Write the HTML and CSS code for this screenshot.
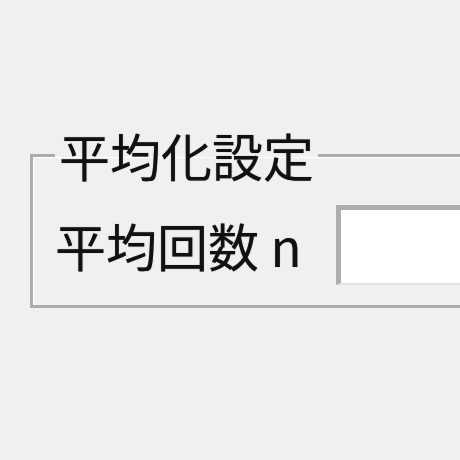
FILE: index.html
```html
<!DOCTYPE html>
<html lang="ja">
<head>
    <meta charset="UTF-8">
    <title>平均化設定</title>
    <link rel="stylesheet" href="styles.css">
</head>
<body>
    <fieldset class="group">
        <legend class="group-title">平均化設定</legend>
        <div class="row">
            <label class="row-label" for="avg-count">平均回数 n</label>
            <input class="textbox" id="avg-count" type="text">
        </div>
    </fieldset>
</body>
</html>
```

FILE: styles.css
```css
* {
    box-sizing: border-box;
}

html, body {
    margin: 0;
    height: 100%;
}

body {
    background: #f0f0f0;
    padding: 126px 0 0 30px;
    overflow: hidden;
    font-family: "Noto Sans CJK JP", "Noto Sans", sans-serif;
    color: #111;
}

.group {
    width: 600px;
    margin: 0;
    padding: 0 0 20px 22px;
    border: 3px solid #acacac;
    box-shadow: inset 1px 1px 0 #fff;
}

.group-title {
    margin-left: 0;
    padding: 0 4px;
    font-size: 51px;
    line-height: 58px;
    text-shadow: 0 0 1px rgba(0, 0, 0, 0.5);
}

.row {
    display: flex;
    align-items: center;
    margin-top: 21px;
}

.row-label {
    font-size: 51px;
    line-height: 58px;
    width: 281px;
    text-shadow: 0 0 1px rgba(0, 0, 0, 0.5);
}

.textbox {
    width: 240px;
    height: 80px;
    background: #fff;
    border-style: solid;
    border-width: 5px 2px 2px 5px;
    border-color: #adadad #e3e3e3 #e3e3e3 #adadad;
    outline: none;
}
```
